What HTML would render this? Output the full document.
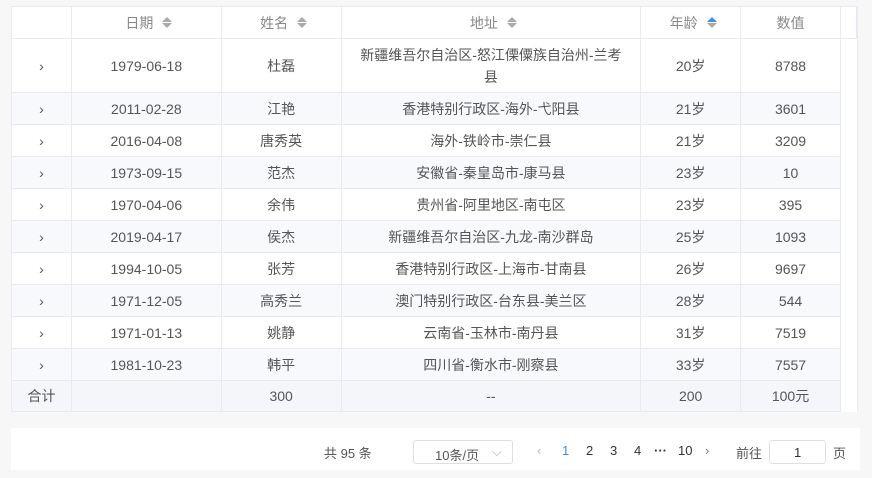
<!DOCTYPE html><html><head><meta charset="utf-8"><style>
body{margin:0;width:872px;height:478px;background:#f7f7f8;font-family:"Liberation Sans","Noto Sans CJK SC",sans-serif;font-size:14px;color:#555;position:relative;overflow:hidden}
.wrap{position:absolute;left:11px;top:6px;width:846px;height:405px;background:#fff;border-right:1px solid #e8eaf2}
table{border-collapse:collapse;table-layout:fixed;position:absolute;left:0;top:0}
td,th{border:1px solid #e8eaf2;text-align:center;padding:0;font-weight:normal}
th{height:31px;color:#888;}
tr.r td{height:31px}
tr.s td{background:#f8f9fc}
.sum td{background:#f5f6fa;height:30px}
.ar{display:inline-block;vertical-align:middle;margin-left:14px;width:0;position:relative;top:-1px}
.ar i{display:block;width:0;height:0;border-left:5px solid transparent;border-right:5px solid transparent}
.ar .u{border-bottom:5px solid #aaa;margin-bottom:1px;margin-left:-5px}
.ar .d{border-top:5px solid #aaa;margin-left:-5px}
.ar .b{border-bottom-color:#3a8ee6}
.ex{color:#555;font-size:14px}
.pg{position:absolute;left:11px;top:428px;width:849px;height:42px;background:#fff}
.pg span{position:absolute;top:15px;font-size:13px;color:#555}
.sel{position:absolute;left:402px;top:12px;width:98px;height:22px;border:1px solid #dcdfe6;border-radius:3px}
.inp{position:absolute;left:758px;top:12px;width:55px;height:22px;border:1px solid #dcdfe6;border-radius:3px}
</style></head><body>
<div class="wrap">
<table>
<colgroup><col style="width:60px"><col style="width:150px"><col style="width:120px"><col style="width:300px"><col style="width:100px"><col style="width:100px"><col style="width:16px"></colgroup>
<tr><th></th><th>日期<span class="ar"><i class="u"></i><i class="d"></i></span></th><th>姓名<span class="ar"><i class="u"></i><i class="d"></i></span></th><th>地址<span class="ar"><i class="u"></i><i class="d"></i></span></th><th>年龄<span class="ar"><i class="u b"></i><i class="d"></i></span></th><th>数值</th><th></th></tr>
<tr class="r"><td style="height:53px" class="ex">›</td><td>1979-06-18</td><td>杜磊</td><td style="line-height:22px;padding:0 18px">新疆维吾尔自治区-怒江傈僳族自治州-兰考县</td><td>20岁</td><td>8788</td><td style="border:none"></td></tr>
<tr class="r s"><td class="ex">›</td><td>2011-02-28</td><td>江艳</td><td>香港特别行政区-海外-弋阳县</td><td>21岁</td><td>3601</td><td style="background:#fff;border:none"></td></tr>
<tr class="r"><td class="ex">›</td><td>2016-04-08</td><td>唐秀英</td><td>海外-铁岭市-崇仁县</td><td>21岁</td><td>3209</td><td style="border:none"></td></tr>
<tr class="r s"><td class="ex">›</td><td>1973-09-15</td><td>范杰</td><td>安徽省-秦皇岛市-康马县</td><td>23岁</td><td>10</td><td style="background:#fff;border:none"></td></tr>
<tr class="r"><td class="ex">›</td><td>1970-04-06</td><td>余伟</td><td>贵州省-阿里地区-南屯区</td><td>23岁</td><td>395</td><td style="border:none"></td></tr>
<tr class="r s"><td class="ex">›</td><td>2019-04-17</td><td>侯杰</td><td>新疆维吾尔自治区-九龙-南沙群岛</td><td>25岁</td><td>1093</td><td style="background:#fff;border:none"></td></tr>
<tr class="r"><td class="ex">›</td><td>1994-10-05</td><td>张芳</td><td>香港特别行政区-上海市-甘南县</td><td>26岁</td><td>9697</td><td style="border:none"></td></tr>
<tr class="r s"><td class="ex">›</td><td>1971-12-05</td><td>高秀兰</td><td>澳门特别行政区-台东县-美兰区</td><td>28岁</td><td>544</td><td style="background:#fff;border:none"></td></tr>
<tr class="r"><td class="ex">›</td><td>1971-01-13</td><td>姚静</td><td>云南省-玉林市-南丹县</td><td>31岁</td><td>7519</td><td style="border:none"></td></tr>
<tr class="r s"><td class="ex">›</td><td>1981-10-23</td><td>韩平</td><td>四川省-衡水市-刚察县</td><td>33岁</td><td>7557</td><td style="background:#fff;border:none"></td></tr>
<tr class="sum"><td>合计</td><td></td><td>300</td><td>--</td><td>200</td><td>100元</td><td style="background:#fff;border:none"></td></tr>
</table></div>
<div class="pg">
<span style="left:313px">共 95 条</span>
<div class="sel"><span style="left:21px;top:4px">10条/页</span><span style="left:78px;top:3px;color:#aaa">⌵</span></div>
<span style="left:526px;color:#bbb">‹</span>
<span style="left:551px;color:#3a8ee6">1</span>
<span style="left:575px;color:#333">2</span>
<span style="left:599px;color:#333">3</span>
<span style="left:623px;color:#333">4</span>
<span style="left:643px;color:#333;font-weight:bold">···</span>
<span style="left:667px;color:#333">10</span>
<span style="left:694px;color:#777">›</span>
<span style="left:725px">前往</span>
<div class="inp"><span style="left:24px;top:4px;color:#333">1</span></div>
<span style="left:822px">页</span>
</div>
</body></html>
